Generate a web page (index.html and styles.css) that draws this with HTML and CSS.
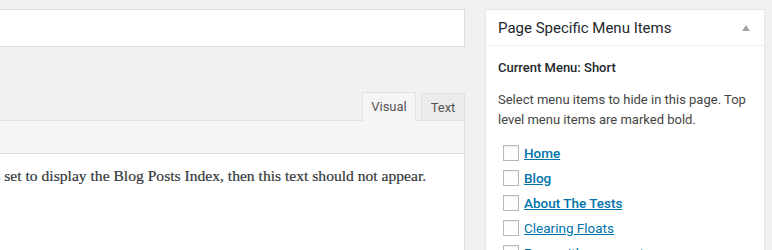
FILE: index.html
```html
<!DOCTYPE html>
<html>
<head>
<meta charset="utf-8">
<link rel="stylesheet" href="styles.css">
</head>
<body>
<div class="wrap">
  <div class="main">
    <div class="title-input"></div>
    <div class="tabs">
      <span class="tab tab-active">Visual</span>
      <span class="tab tab-text">Text</span>
    </div>
    <div class="editor">
      <div class="toolbar"></div>
      <div class="content">
        <p class="para"><a class="plink" href="#">is</a> set to display the Blog Posts Index, then this text should not appear.</p>
      </div>
    </div>
  </div>
  <div class="side">
    <div class="box">
      <div class="box-head">
        <h2 class="box-title">Page Specific Menu Items</h2>
        <span class="toggle"></span>
      </div>
      <div class="box-body">
        <p class="current">Current Menu: Short</p>
        <p class="desc">Select menu items to hide in this page. Top level menu items are marked bold.</p>
        <ul class="items">
          <li class="item"><span class="cb"></span><a class="ilink bold" href="#">Home</a></li>
          <li class="item"><span class="cb"></span><a class="ilink bold" href="#">Blog</a></li>
          <li class="item"><span class="cb"></span><a class="ilink bold" href="#">About The Tests</a></li>
          <li class="item"><span class="cb"></span><a class="ilink" href="#">Clearing Floats</a></li>
          <li class="item"><span class="cb"></span><a class="ilink" href="#">Page with comments</a></li>
        </ul>
      </div>
    </div>
  </div>
</div>
</body>
</html>
```
FILE: styles.css
```css
html, body {
  margin: 0;
  padding: 0;
  background: #f1f1f1;
  height: 250px;
  overflow: hidden;
  font-family: Roboto, "Open Sans", "Liberation Sans", sans-serif;
  color: #23282d;
}
.wrap {
  display: flex;
  gap: 20px;
  padding-top: 9px;
  height: 241px;
  overflow: hidden;
}
.main {
  width: 465px;
  flex: none;
}
.title-input {
  height: 36px;
  background: #fff;
  border: 1px solid #dcdcdc;
  border-left: none;
}
.tabs {
  display: flex;
  justify-content: flex-end;
  align-items: flex-end;
  gap: 5px;
  margin-top: 45px;
  height: 28px;
}
.tab {
  box-sizing: border-box;
  font-size: 13px;
  line-height: 19px;
  color: #555;
  border: 1px solid #e2e2e2;
  border-bottom: none;
  padding: 4px 0 4px 0;
  text-align: center;
  height: 27px;
}
.tab-active {
  background: #f5f5f5;
  height: 29px;
  margin-bottom: -1px;
  width: 54px;
}
.tab-text {
  background: #ebebeb;
  width: 44px;
}
.editor {
  border-right: 1px solid #e2e2e2;
  border-top: 1px solid #e2e2e2;
  background: #fff;
  height: 140px;
  overflow: hidden;
}
.toolbar {
  height: 32px;
  background: #f5f5f5;
  border-bottom: 1px solid #dcdcdc;
}
.content {
  padding: 10px 0 0 0;
  overflow: hidden;
}
.para {
  margin: 0 0 0 -10px;
  white-space: nowrap;
  font-family: "Liberation Serif", "Times New Roman", serif;
  font-size: 15.6px;
  line-height: 24px;
  color: #32373c;
  -webkit-text-stroke: 0.2px #32373c;
}
.plink {
  color: #0073aa;
  text-decoration: none;
  -webkit-text-stroke: 0.2px #0073aa;
}
.side {
  width: 280px;
  flex: none;
}
.box {
  background: #fff;
  border: 1px solid #e5e5e5;
  box-shadow: 0 1px 1px rgba(0,0,0,0.04);
  height: 260px;
}
.box-head {
  display: flex;
  align-items: center;
  justify-content: space-between;
  height: 35px;
  border-bottom: 1px solid #eee;
  padding: 0 14px 0 12px;
}
.box-title {
  margin: 0;
  font-size: 15px;
  font-weight: 400;
  color: #23282d;
}
.toggle {
  width: 0;
  height: 0;
  border-left: 4px solid transparent;
  border-right: 4px solid transparent;
  border-bottom: 6px solid #a0a5aa;
}
.box-body {
  padding: 12px 12px 0 12px;
  font-size: 13px;
  line-height: 20px;
  color: #444;
}
.current {
  margin: 0;
  font-weight: 500;
  color: #23282d;
}
.desc {
  margin: 12px 0 0 0;
}
.items {
  list-style: none;
  margin: 10px 0 0 0;
  padding: 0;
}
.item {
  display: flex;
  align-items: center;
  height: 25px;
  padding-left: 5px;
}
.cb {
  box-sizing: border-box;
  width: 16px;
  height: 16px;
  border: 1px solid #b4b9be;
  background: #fff;
  box-shadow: inset 0 1px 2px rgba(0,0,0,0.07);
  margin-right: 5px;
  flex: none;
}
.ilink {
  color: #0073aa;
  text-decoration: underline;
  font-size: 13.5px;
}
.bold {
  font-weight: 500;
}
```
